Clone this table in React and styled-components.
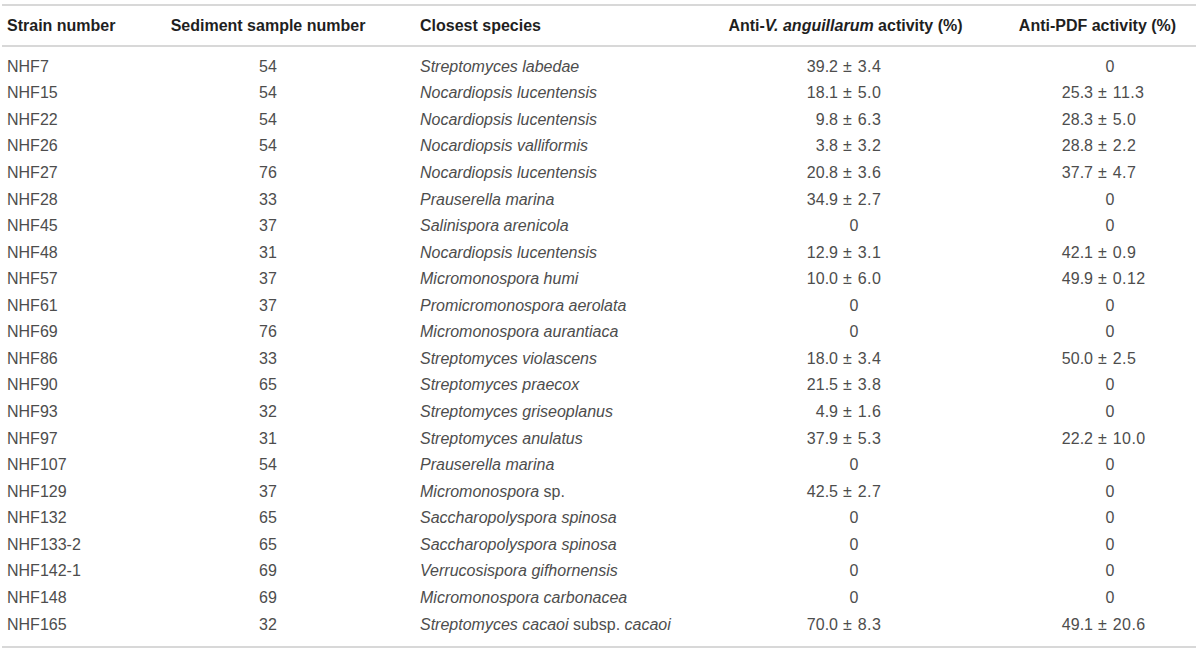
import React from "react";
import styled, { createGlobalStyle } from "styled-components";

const GlobalStyle = createGlobalStyle`
  html, body {
    margin: 0;
    padding: 0;
    background: #ffffff;
  }
  body {
    font-family: "Liberation Sans", Arial, Helvetica, sans-serif;
    font-size: 16px;
    color: #4d4d4d;
  }
`;

const COLS = "158px 216px 324px 291px 1fr";
const LINE = "#d8d8d8";

const Table = styled.div`
  margin: 4px 4px 0 2px;
  border-top: 2px solid ${LINE};
  border-bottom: 2px solid ${LINE};
`;

const HeaderRow = styled.div`
  display: grid;
  grid-template-columns: ${COLS};
  height: 39px;
  align-items: center;
  border-bottom: 2px solid ${LINE};
  font-weight: 700;
  color: #1f1f1f;
`;

const Body = styled.div`
  padding: 6.7px 0 7.6px;
`;

const Row = styled.div`
  display: grid;
  grid-template-columns: ${COLS};
  height: 26.57px;
  line-height: 26.57px;
  align-items: center;
`;

const Cell = styled.div`
  text-align: ${(p) => p.$align || "left"};
  padding-left: ${(p) => p.$pl || 0}px;
  white-space: nowrap;
`;

const Em = styled.i`
  font-style: italic;
`;

const PM = styled.div`
  display: grid;
  grid-template-columns: ${(p) => p.$left}px auto 1fr;
  white-space: nowrap;
`;

const PMLeft = styled.span`
  text-align: right;
  padding-right: 4px;
`;

const PMSign = styled.span`
  padding: 0 1px;
`;

const PMRight = styled.span`
  text-align: left;
  padding-left: 5px;
  letter-spacing: 0.4px;
`;

const rows = [
  ["NHF7", "54", [["Streptomyces labedae", 1]], "39.2 ± 3.4", "0"],
  ["NHF15", "54", [["Nocardiopsis lucentensis", 1]], "18.1 ± 5.0", "25.3 ± 11.3"],
  ["NHF22", "54", [["Nocardiopsis lucentensis", 1]], "9.8 ± 6.3", "28.3 ± 5.0"],
  ["NHF26", "54", [["Nocardiopsis valliformis", 1]], "3.8 ± 3.2", "28.8 ± 2.2"],
  ["NHF27", "76", [["Nocardiopsis lucentensis", 1]], "20.8 ± 3.6", "37.7 ± 4.7"],
  ["NHF28", "33", [["Prauserella marina", 1]], "34.9 ± 2.7", "0"],
  ["NHF45", "37", [["Salinispora arenicola", 1]], "0", "0"],
  ["NHF48", "31", [["Nocardiopsis lucentensis", 1]], "12.9 ± 3.1", "42.1 ± 0.9"],
  ["NHF57", "37", [["Micromonospora humi", 1]], "10.0 ± 6.0", "49.9 ± 0.12"],
  ["NHF61", "37", [["Promicromonospora aerolata", 1]], "0", "0"],
  ["NHF69", "76", [["Micromonospora aurantiaca", 1]], "0", "0"],
  ["NHF86", "33", [["Streptomyces violascens", 1]], "18.0 ± 3.4", "50.0 ± 2.5"],
  ["NHF90", "65", [["Streptomyces praecox", 1]], "21.5 ± 3.8", "0"],
  ["NHF93", "32", [["Streptomyces griseoplanus", 1]], "4.9 ± 1.6", "0"],
  ["NHF97", "31", [["Streptomyces anulatus", 1]], "37.9 ± 5.3", "22.2 ± 10.0"],
  ["NHF107", "54", [["Prauserella marina", 1]], "0", "0"],
  ["NHF129", "37", [["Micromonospora", 1], [" sp.", 0]], "42.5 ± 2.7", "0"],
  ["NHF132", "65", [["Saccharopolyspora spinosa", 1]], "0", "0"],
  ["NHF133-2", "65", [["Saccharopolyspora spinosa", 1]], "0", "0"],
  ["NHF142-1", "69", [["Verrucosispora gifhornensis", 1]], "0", "0"],
  ["NHF148", "69", [["Micromonospora carbonacea", 1]], "0", "0"],
  [
    "NHF165",
    "32",
    [
      ["Streptomyces cacaoi", 1],
      [" subsp. ", 0],
      ["cacaoi", 1],
    ],
    "70.0 ± 8.3",
    "49.1 ± 20.6",
  ],
];

function Species({ parts }) {
  return parts.map(([t, it], i) =>
    it ? <Em key={i}>{t}</Em> : <span key={i}>{t}</span>
  );
}

function Value({ v, left, zeroPad }) {
  if (!v.includes("±")) {
    return (
      <Cell $align="center" $pl={zeroPad}>
        {v}
      </Cell>
    );
  }
  const [a, b] = v.split("±").map((s) => s.trim());
  return (
    <PM $left={left}>
      <PMLeft>{a}</PMLeft>
      <PMSign>±</PMSign>
      <PMRight>{b}</PMRight>
    </PM>
  );
}

export default function App() {
  return (
    <>
      <GlobalStyle />
      <Table>
        <HeaderRow>
          <Cell $pl={5}>Strain number</Cell>
          <Cell $align="center">Sediment sample number</Cell>
          <Cell $pl={44}>Closest species</Cell>
          <Cell $align="center">
            Anti-<Em>V. anguillarum</Em> activity (%)
          </Cell>
          <Cell $align="center" $pl={8}>
            Anti-PDF activity (%)
          </Cell>
        </HeaderRow>
        <Body>
          {rows.map(([strain, sed, sp, v1, v2]) => (
            <Row key={strain}>
              <Cell $pl={5}>{strain}</Cell>
              <Cell $align="center">{sed}</Cell>
              <Cell $pl={44}>
                <Species parts={sp} />
              </Cell>
              <Value v={v1} left={142} zeroPad={17} />
              <Value v={v2} left={106} zeroPad={33} />
            </Row>
          ))}
        </Body>
      </Table>
    </>
  );
}
